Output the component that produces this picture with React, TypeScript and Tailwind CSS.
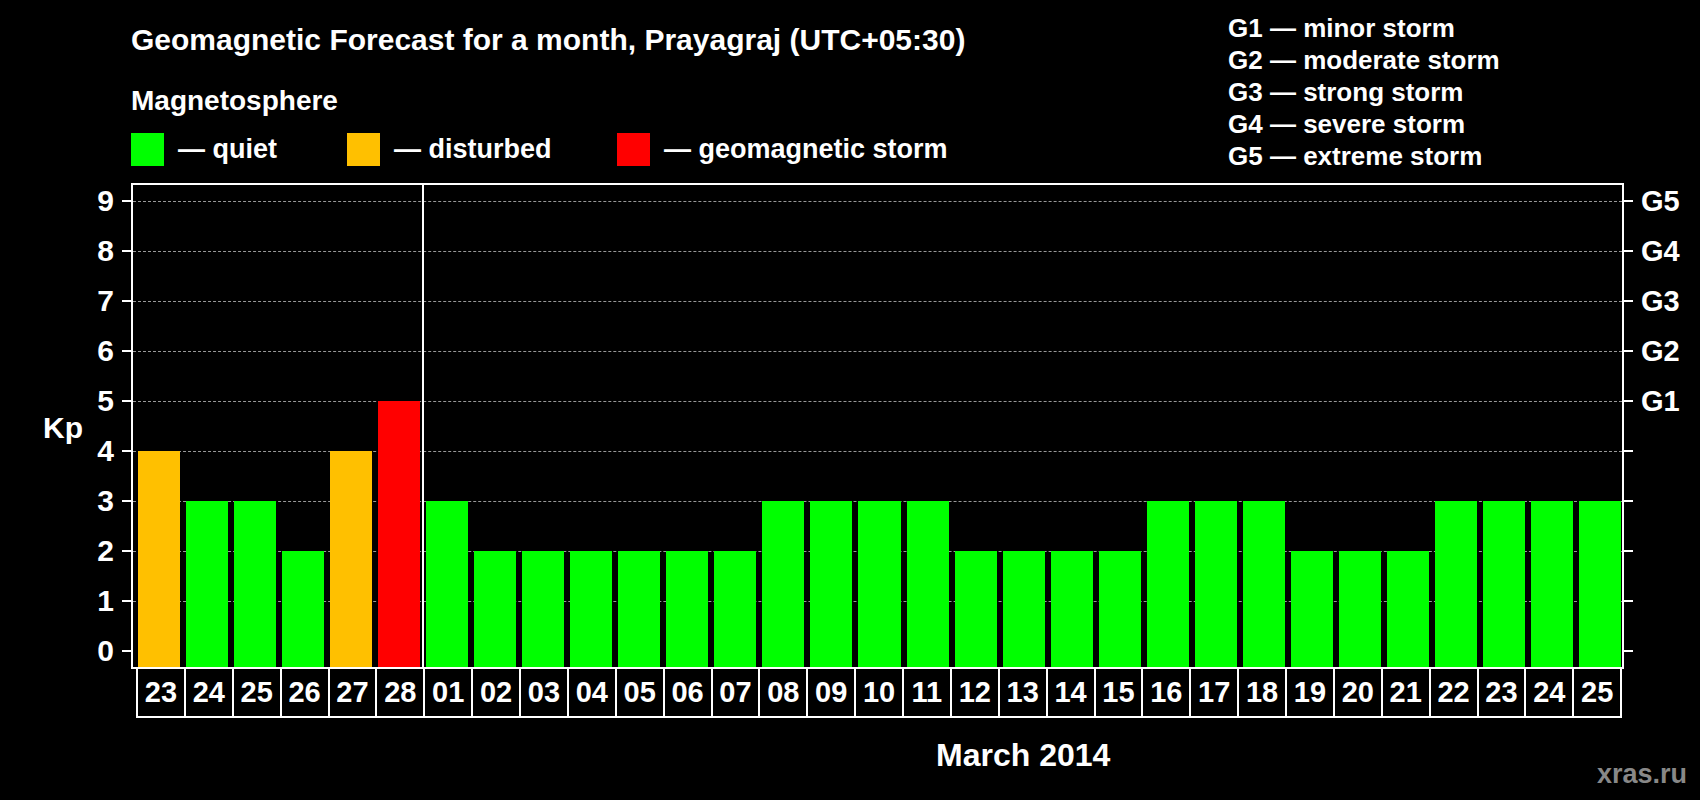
import React from "react";

const data: [string, number][] = [
  ["23", 4], ["24", 3], ["25", 3], ["26", 2], ["27", 4], ["28", 5],
  ["01", 3], ["02", 2], ["03", 2], ["04", 2], ["05", 2], ["06", 2], ["07", 2],
  ["08", 3], ["09", 3], ["10", 3], ["11", 3], ["12", 2], ["13", 2], ["14", 2],
  ["15", 2], ["16", 3], ["17", 3], ["18", 3], ["19", 2], ["20", 2], ["21", 2],
  ["22", 3], ["23", 3], ["24", 3], ["25", 3],
];

const color = (v: number) => (v >= 5 ? "#ff0000" : v === 4 ? "#ffc000" : "#00ff00");
const yOf = (k: number) => 468 - 50 * k;

export default function App() {
  const levels = [0, 1, 2, 3, 4, 5, 6, 7, 8, 9];
  return (
    <div className="w-[1700px] h-[800px] bg-black text-white font-bold relative overflow-hidden" style={{ fontFamily: '"Liberation Sans", Arial, sans-serif' }}>
      <div className="h-[183px]">
        <div className="pl-[131px] pt-[22px]">
          <div className="text-[30px] leading-[36px]">Geomagnetic Forecast for a month, Prayagraj (UTC+05:30)</div>
          <div className="text-[28px] leading-[34px] mt-[26px]">Magnetosphere</div>
          <div className="flex items-center mt-[15px] text-[27px] leading-[33px]">
            <div className="w-[33px] h-[33px] bg-[#00ff00]" />
            <span className="ml-[14px] w-[169px]">— quiet</span>
            <div className="w-[33px] h-[33px] bg-[#ffc000]" />
            <span className="ml-[14px] w-[223px]">— disturbed</span>
            <div className="w-[33px] h-[33px] bg-[#ff0000]" />
            <span className="ml-[14px]">— geomagnetic storm</span>
          </div>
        </div>
        <div className="absolute left-[1228px] top-[12px] text-[26px] leading-[32px]">
          <div>G1 — minor storm</div>
          <div>G2 — moderate storm</div>
          <div>G3 — strong storm</div>
          <div>G4 — severe storm</div>
          <div>G5 — extreme storm</div>
        </div>
      </div>
      <div className="flex">
        <div className="w-[131px] h-[486px] relative">
          <div className="absolute left-[43px] top-[227px] text-[30px] leading-[36px]">Kp</div>
          {levels.map((k) => (
            <div key={k} className="absolute left-0 w-[131px]" style={{ top: yOf(k) - 18 }}>
              <div className="absolute right-[17px] text-[30px] leading-[36px]">{k}</div>
              <div className="absolute left-[122px] top-[17px] w-[9px] h-[2px] bg-white" />
            </div>
          ))}
        </div>
        <div className="w-[1493px] h-[486px] border-2 border-white relative">
          {levels.slice(1).map((k) => (
            <div key={k} className="absolute left-0 right-0 border-t border-dashed border-[#999]" style={{ top: yOf(k) - 2 }} />
          ))}
          {levels.map((k) => (
            <div key={k} className="absolute right-[-11px] w-[9px] h-[2px] bg-white" style={{ top: yOf(k) - 3 }} />
          ))}
          <div className="absolute left-[289px] top-0 bottom-0 w-[2px] bg-white" />
          <div className="absolute inset-0 flex items-end gap-[6px] pl-[5px] pr-[1px]">
            {data.map(([, v], i) => (
              <div key={i} className="flex-1" style={{ height: 16 + 50 * v, background: color(v) }} />
            ))}
          </div>
        </div>
        <div className="relative">
          {[5, 6, 7, 8, 9].map((k) => (
            <div key={k} className="absolute left-[17px] text-[29px] leading-[34px]" style={{ top: yOf(k) - 17 }}>G{k - 4}</div>
          ))}
        </div>
      </div>
      <div className="flex ml-[136px] w-[1486px] border-b-2 border-l-2 border-white">
        {data.map(([d], i) => (
          <div key={i} className="flex-1 h-[47px] border-r-2 border-white flex items-center justify-center text-[29px]">{d}</div>
        ))}
      </div>
      <div className="ml-[936px] mt-[18px] text-[32px] leading-[38px]">March 2014</div>
      <div className="absolute left-[1597px] top-[757px] text-[27px] leading-[34px] text-[#888]">xras.ru</div>
    </div>
  );
}
